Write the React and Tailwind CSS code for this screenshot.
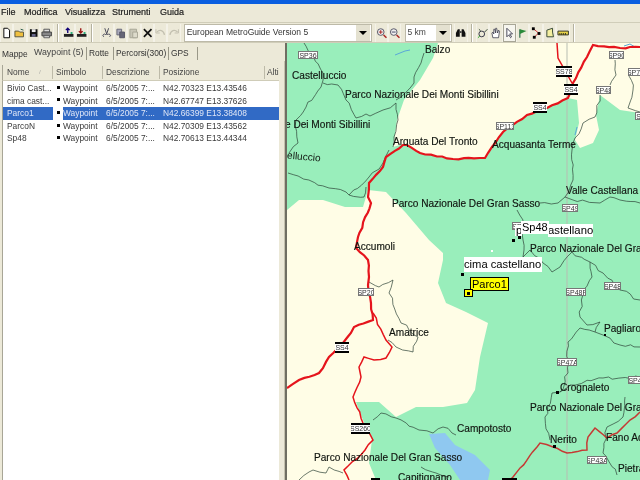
const waypoints = [
  ["Bivio Cast...", "N42.70323 E13.43546"],
  ["cima cast...", "N42.67747 E13.37626"],
  ["Parco1", "N42.66399 E13.38408"],
  ["ParcoN", "N42.70309 E13.43562"],
  ["Sp48", "N42.70613 E13.44344"],
];

const labels = [
  ["Balzo", 425, 49],
  ["Castelluccio", 292, 75],
  ["Parco Nazionale Dei Monti Sibillini", 345, 94],
  ["e Dei Monti Sibillini", 285, 124],
  ["Arquata Del Tronto", 393, 141],
  ["Acquasanta Terme", 492, 144],
  ["Valle Castellana", 566, 190],
  ["Parco Nazionale Del Gran Sasso", 392, 203],
  ["Accumoli", 354, 246],
  ["Parco Nazionale Del Gra", 530, 248],
  ["Pagliaro", 604, 328],
  ["Amatrice", 389, 332],
  ["Crognaleto", 560, 387],
  ["Parco Nazionale Del Gra", 530, 407],
  ["Campotosto", 457, 428],
  ["Fano Ad", 606, 437],
  ["Nerito", 550, 439],
  ["Parco Nazionale Del Gran Sasso", 314, 457],
  ["Pietra", 618, 468],
  ["Capitignano", 398, 477],
];

const shields = [
  ["SP36", 298, 51, 20],
  ["SP113", 496, 122, 18],
  ["SP90", 609, 51, 15],
  ["SP70", 628, 68, 15],
  ["SP48", 596, 86, 15],
  ["SP", 635, 112, 12],
  ["SP20", 358, 288, 16],
  ["SP49", 562, 204, 16],
  ["SP48F", 566, 288, 20],
  ["SP48", 604, 282, 17],
  ["SP47A", 557, 358, 20],
  ["SP4", 628, 376, 14],
  ["SP43A", 587, 456, 20],
  ["SP", 512, 222, 10],
];

const blackShields = [
  ["SS78", 556, 66, 16],
  ["SS4", 564, 84, 14],
  ["SS4", 533, 102, 14],
  ["SS4", 335, 342, 14],
  ["SS260", 351, 423, 19],
  ["", 502, 478, 15],
  ["", 371, 478, 9],
];

const thinLines = [
  "304,43 323,73 321,87 296,120 298,143 289,153",
  "323,83 338,85 346,100 356,118 366,114 370,116 383,110 396,103 398,120 394,137 393,147",
  "424,53 421,63 414,77 414,83 401,97 396,100",
  "288,173 329,188 346,192 349,195 369,177 383,163 389,150",
  "349,195 364,197 366,187",
  "369,282 379,287 393,280 389,293 401,323 418,337 413,352 396,347 388,340",
  "373,420 381,413 396,418 419,430 433,433 443,427 456,435",
  "299,480 313,470 326,473 329,467 343,473",
  "421,467 436,473 449,477",
  "615,60 616,75 610,85",
  "600,95 595,117 583,123 575,138 572,150 573,180 565,197 558,203 540,203",
  "565,197 573,200 600,203 610,197 620,200 640,203",
  "630,70 633,90 628,108 640,112",
  "517,210 523,220 523,240 523,257 530,250 543,263 552,272 560,267 572,252 590,262 592,277 583,290 580,317 587,325 600,322 595,332 580,328 568,342 568,373 560,392 552,393 545,417 550,440",
  "595,332 603,335 620,345 640,347",
  "590,262 603,273 620,290 640,300",
  "560,392 570,385 603,378 640,377",
  "625,397 623,417 607,427 603,453 617,475",
];

// breaks a polyline into short jittered steps so it reads like a hand digitised map line
function wiggle(points, amount) {
  let seed = points.length * 7 + 3;
  const next = () => {
    seed = (seed * 137 + 59) % 1009;
    return seed / 1009 - 0.5;
  };
  const pts = points.split(" ").map((p) => p.split(",").map(Number));
  const out = [];
  pts.forEach(([x, y], i) => {
    out.push(`${x},${y}`);
    if (i === pts.length - 1) return;
    const [nx, ny] = pts[i + 1];
    const steps = Math.floor(Math.hypot(nx - x, ny - y) / 5);
    for (let s = 1; s < steps; s++) {
      const px = x + ((nx - x) * s) / steps + next() * amount;
      const py = y + ((ny - y) * s) / steps + next() * amount;
      out.push(`${px.toFixed(1)},${py.toFixed(1)}`);
    }
  });
  return out.join(" ");
}

function Icon({ children }) {
  return (
    <span className="flex h-[18px] w-[13.4px] flex-none items-center justify-center border-x border-[#f4f2e8]">
      <svg width="12" height="12" viewBox="0 0 12 12">
        {children}
      </svg>
    </span>
  );
}

function Sep() {
  return <span className="mx-[3px] h-[18px] w-[2px] flex-none border-x border-l-[#b5b29f] border-r-white" />;
}

function ComboArrow() {
  return (
    <span className="flex h-[16px] w-[14px] flex-none items-center justify-center bg-[#e4e1d0]">
      <span className="h-0 w-0 border-x-[4px] border-t-[4px] border-x-transparent border-t-black" />
    </span>
  );
}

function Toolbar() {
  return (
    <div className="flex h-[21px] flex-none items-center border-y border-y-[#d0cdb9] bg-[#ece9d8]">
      <Icon><path d="M3 1h4l2 2v8H3z" fill="#fff" stroke="#000" /></Icon>
      <Icon><path d="M1 4h4l1 1h4v5H1z" fill="#f0c040" stroke="#554" /><path d="M7 2l3 1" stroke="#254" /></Icon>
      <Icon><path d="M2 2h8v8H2z" fill="#111" /><path d="M4 2h4v3H4z" fill="#eee" /><path d="M4 7h4v3H4z" fill="#668" /></Icon>
      <Icon><path d="M3 2h6v3H3z" fill="#ddd" stroke="#555" /><path d="M1 5h10v4H1z" fill="#888" stroke="#444" /><path d="M3 9h6v2H3z" fill="#fff" stroke="#555" /></Icon>
      <Sep />
      <Icon><path d="M5 1v5M3 3l2-2 2 2" stroke="#107" fill="none" strokeWidth="1.4" /><path d="M1 7h10v3H1z" fill="#222" /><path d="M8 5h2v2H8z" fill="#2a7" /></Icon>
      <Icon><path d="M5 6V1M3 4l2 2 2-2" stroke="#911" fill="none" strokeWidth="1.4" /><path d="M1 7h10v3H1z" fill="#222" /><path d="M8 5h2v2H8z" fill="#2a7" /></Icon>
      <Sep />
      <span className="w-[4px] flex-none" />
      <Icon><path d="M4 1l2 6 2-6M3 10a1.5 1.5 0 1 1 2-2l1-1 1 1a1.5 1.5 0 1 1 2 2" stroke="#445" fill="none" /></Icon>
      <Icon><path d="M2 2h5v6H2z" fill="#aab" stroke="#667" /><path d="M5 5h5v6H5z" fill="#667" stroke="#556" /></Icon>
      <Icon><path d="M2 2h7v9H2z" fill="#c8c6b6" stroke="#a8a696" /><path d="M5 5h5v6H5z" fill="#dddbcb" stroke="#a8a696" /></Icon>
      <Icon><path d="M2 2l8 8M10 2l-8 8" stroke="#111" strokeWidth="1.8" /></Icon>
      <Icon><path d="M2 5c3-3 7-2 8 3" stroke="#c3c0b0" fill="none" strokeWidth="1.4" /><path d="M1 2v4h4" stroke="#c3c0b0" fill="none" /></Icon>
      <Icon><path d="M10 5C7 2 3 3 2 8" stroke="#c3c0b0" fill="none" strokeWidth="1.4" /><path d="M11 2v4H7" stroke="#c3c0b0" fill="none" /></Icon>
      <span className="w-[3px] flex-none" />
      <div className="flex h-[18px] w-[188px] flex-none items-center justify-between border border-[#bdbaa8] bg-white pl-[2px] pr-[1px] text-[8.5px] text-[#333]">
        European MetroGuide Version 5
        <ComboArrow />
      </div>
      <span className="w-[3px] flex-none" />
      <Icon><circle cx="5" cy="5" r="3.5" fill="#eee" stroke="#556" /><path d="M8 8l3 3" stroke="#a22" strokeWidth="1.5" /><path d="M3 5h4M5 3v4" stroke="#a22" /></Icon>
      <Icon><circle cx="5" cy="5" r="3.5" fill="#eee" stroke="#556" /><path d="M8 8l3 3" stroke="#a22" strokeWidth="1.5" /><path d="M3 5h4" stroke="#446" /></Icon>
      <span className="w-[4px] flex-none" />
      <div className="flex h-[18px] w-[47px] flex-none items-center justify-between border border-[#bdbaa8] bg-white pl-[1px] pr-[1px] text-[8.5px] text-[#444]">
        5 km
        <ComboArrow />
      </div>
      <span className="w-[2px] flex-none" />
      <Icon><path d="M1 6l2-4h2v8H1zM11 6L9 2H7v8h4z" fill="#111" /><path d="M5 4h2v2H5z" fill="#444" /></Icon>
      <Sep />
      <Icon><circle cx="5" cy="7" r="3" fill="none" stroke="#334" /><path d="M2 2l2 2M8 5l3-3" stroke="#343" /><path d="M1 11l2-2" stroke="#2a2" /></Icon>
      <Icon><path d="M3 11L2 6l1-1 1 2V2l1 0 1 4V1l1 0 1 5 1-3 1 1-1 7z" fill="#fff" stroke="#334" strokeWidth=".8" /></Icon>
      <span className="flex h-[18px] w-[13.4px] flex-none items-center justify-center border border-[#a8a696] bg-[#f6f5ee]">
        <svg width="12" height="12" viewBox="0 0 12 12"><path d="M3 1v9l2-2 2 3 1-1-2-3h3z" fill="#fff" stroke="#445" /></svg>
      </span>
      <Icon><path d="M3 11V2" stroke="#264" strokeWidth="1.2" /><path d="M3 2l7 2-7 3z" fill="#2a8a3a" /></Icon>
      <Icon><path d="M3 1l6 5-5 5" stroke="#c33" fill="none" /><rect x="2" y="0" width="3" height="3" /><rect x="8" y="5" width="3" height="3" /><rect x="3" y="9" width="3" height="3" /></Icon>
      <Icon><path d="M3 10V3l6-2v4l1 5z" fill="#f4efa0" stroke="#343" /></Icon>
      <Icon><path d="M1 4h11v4H1z" fill="#e9d44a" stroke="#332" /><path d="M3 6v2M5 6v2M7 6v2M9 6v2" stroke="#332" /></Icon>
      <span className="ml-[3px] h-[18px] w-[2px] flex-none border-x border-l-[#b5b29f] border-r-white" />
    </div>
  );
}

function ListPanel() {
  return (
    <div className="flex w-[287px] flex-none flex-col border-r-2 border-r-[#6f6e62] bg-[#ece9d8] text-[8.4px]">
      <div className="flex h-[18px] flex-none items-center pt-[2px] text-[#333]">
        <span className="ml-[2px] w-[31px] pt-[2px]">Mappe</span>
        <span className="w-[53px] pl-[1px] text-[8.8px] text-[#444]">Waypoint (5)</span>
        <span className="h-[13px] w-[2px] border-l border-l-[#9a9888]" />
        <span className="w-[25px] pl-[1px]">Rotte</span>
        <span className="h-[13px] w-[2px] border-l border-l-[#9a9888]" />
        <span className="w-[53px] pl-[1px]">Percorsi(300)</span>
        <span className="h-[13px] w-[2px] border-l border-l-[#9a9888]" />
        <span className="w-[27px] pl-[1px]">GPS</span>
        <span className="h-[13px] w-[2px] border-l border-l-[#9a9888]" />
      </div>
      <div className="flex min-h-0 flex-1 flex-col border-r border-r-[#c4c1ae] pl-[2px] pr-[5px] pt-[4px]">
        <div className="flex h-[16px] flex-none items-center border-b border-l border-b-[#cfccb8] border-l-[#a8a696] text-[#444]">
          <span className="flex w-[49px] items-center gap-[10px] pl-[4px]">Nome <span className="text-[5px] text-[#999]">/</span></span>
          <span className="h-[13px] w-[1px] bg-[#bdbaa8]" />
          <span className="w-[49px] pl-[3px]">Simbolo</span>
          <span className="h-[13px] w-[1px] bg-[#bdbaa8]" />
          <span className="w-[56px] pl-[3px]">Descrizione</span>
          <span className="h-[13px] w-[1px] bg-[#bdbaa8]" />
          <span className="w-[104px] pl-[3px]">Posizione</span>
          <span className="h-[13px] w-[1px] bg-[#bdbaa8]" />
          <span className="pl-[2px]">Alti</span>
        </div>
        <div className="flex-1 border-l border-l-[#a8a696] bg-white pt-[1px]">
          {waypoints.map(([name, pos], i) => {
            const selected = i === 2;
            return (
              <div key={name} className={`flex h-[12.6px] items-center ${selected ? "bg-[#316ac5] text-[#dfe6f6]" : "text-[#3a3a3a]"}`}>
                <span className="w-[50px] flex-none truncate pl-[4px]">{name}</span>
                <span className={`flex h-full w-[10px] flex-none items-center justify-center ${selected ? "bg-white" : ""}`}>
                  <span className="mb-[2px] h-[3px] w-[3px] bg-black" />
                </span>
                <span className="w-[42px] flex-none">Waypoint</span>
                <span className="w-[58px] flex-none pl-[1px]">6/5/2005 7:...</span>
                <span className="flex-none">{pos}</span>
              </div>
            );
          })}
        </div>
      </div>
    </div>
  );
}

function MapView() {
  return (
    <div className="relative flex-1 overflow-hidden bg-[#99eebb]">
      <svg className="absolute left-0 top-0" width="353" height="437" viewBox="287 43 353 437">
        <polygon fill="#fffde6" points="438,43 433,58 420,80 404,100 397,120 393,147 400,145 407,145 420,153 453,159 485,158 492,147 503,132 527,115 547,108 568,98 577,100 579,123 575,140 580,148 593,143 599,130 596,115 600,95 620,110 640,113 640,43" />
        <polygon fill="#fffde6" points="287,210 299,200 323,200 345,207 363,207 368,190 386,192 406,213 429,240 443,253 443,260 438,283 446,303 466,312 488,323 480,357 475,390 467,403 443,407 416,407 396,417 379,402 356,402 363,420 372,440 369,463 376,480 287,480" />
        <polygon fill="#8fc8f0" points="429,434 445,433 455,445 475,455 490,470 488,480 460,480 450,465 435,448" />
        <path d="M567 43V480" stroke="#b7bdb2" strokeWidth="1" />
        {thinLines.map((points, i) => (
          <polyline key={i} points={wiggle(points, 3)} fill="none" stroke="#2c4236" strokeWidth="0.7" />
        ))}
        <path d="M395 55l10-4 5-1M575 135l2-8M624 46l6-2 5 3" fill="none" stroke="#5aa8d8" strokeWidth="1" />
        <polyline fill="none" stroke="#e5141c" strokeWidth="2.2" points={wiggle("640,47 620,48 593,45 587,57 573,83 568,98 547,108 527,115 503,132 492,147 485,158 453,159 420,153 407,145 403,145 386,157 383,167 369,183 368,197 371,203 358,237 356,248 368,260 369,277 368,285 371,303 373,320 354,327 343,343 329,357 319,373 299,380 287,388", 1.2)} />
        <polyline fill="none" stroke="#e5141c" strokeWidth="1.5" points="557,43 558,58 572,83" />
        <polyline fill="none" stroke="#e5141c" strokeWidth="1.5" points={wiggle("373,313 386,340 392,347 386,358 374,360 364,357 359,367 361,377 353,397 363,423 373,440 365,450 344,470 349,480", 1.5)} />
        <polyline fill="none" stroke="#c53a34" strokeWidth="1.5" points={wiggle("640,412 630,420 617,433 607,438 595,428 588,437 587,450 567,453 553,447 540,443 513,477 510,480", 1.5)} />
        <rect x="512" y="239" width="3" height="3" />
        <rect x="518" y="236" width="3" height="3" />
        <rect x="461" y="273" width="3" height="3" />
        <rect x="491" y="250" width="2" height="2" fill="#fff" />
        <rect x="604" y="334" width="2" height="2" />
        <rect x="553" y="445" width="3" height="3" />
        <rect x="556" y="391" width="3" height="3" />
      </svg>
      {shields.map(([text, x, y, w]) => (
        <span
          key={text + x}
          className="absolute flex h-[8px] items-center justify-center overflow-hidden border border-[#777] bg-white text-[7px] leading-none text-[#333]"
          style={{ left: x - 287, top: y - 43, width: w }}
        >
          {text}
        </span>
      ))}
      {blackShields.map(([text, x, y, w]) => (
        <span
          key={text + x}
          className="absolute flex h-[11px] items-center justify-center overflow-hidden border-y-2 border-y-black bg-white text-[7px] leading-none text-[#333]"
          style={{ left: x - 287, top: y - 43, width: w }}
        >
          {text}
        </span>
      ))}
      {labels.map(([text, x, y]) => (
        <span
          key={text + x}
          className="absolute whitespace-nowrap text-[10.1px] leading-[12px] text-[#10140f] [-webkit-text-stroke:0.15px_#10140f]"
          style={{ left: x - 287, top: y - 48 }}
        >
          {text}
        </span>
      ))}
      <span className="absolute left-0 top-[108px] rotate-[5deg] whitespace-nowrap text-[10.1px] leading-[12px] text-[#10140f]">elluccio</span>
      <span className="absolute left-[261px] top-[181px] h-[13px] bg-white text-[11.3px] leading-[13px]">astellano</span>
      <span className="absolute left-[228px] top-[182px] bg-white pl-[1px] text-[11px] leading-[11px]">p</span>
      <span className="absolute left-[234px] top-[178px] bg-white px-[1px] text-[11px] leading-[13px]">Sp48</span>
      <span className="absolute left-[177px] top-[214px] h-[15px] bg-white pr-[1px] text-[11.2px] leading-[15px]">cima castellano</span>
      <span className="absolute left-[183px] top-[234px] border border-black bg-[#ffff00] px-[1px] text-[11px] leading-[12px]">Parco1</span>
      <span className="absolute left-[177px] top-[246px] flex h-[8px] w-[9px] items-center justify-center border border-black bg-[#ffff00]">
        <span className="h-[3px] w-[3px] bg-black" />
      </span>
    </div>
  );
}

export default function App() {
  return (
    <div className="flex h-[480px] w-[640px] flex-col overflow-hidden bg-[#ece9d8] blur-[0.35px] [font-family:'Liberation_Sans',sans-serif]">
      <div className="h-[4px] flex-none bg-[#0a5ee0]" />
      <div className="flex h-[18px] flex-none items-center text-[9px] text-[#222] [-webkit-text-stroke:0.2px_#222]">
        <span className="ml-[1px] w-[23px]">File</span>
        <span className="w-[41px]">Modifica</span>
        <span className="w-[47px]">Visualizza</span>
        <span className="w-[48px]">Strumenti</span>
        <span>Guida</span>
      </div>
      <Toolbar />
      <div className="flex min-h-0 flex-1">
        <ListPanel />
        <MapView />
      </div>
    </div>
  );
}
